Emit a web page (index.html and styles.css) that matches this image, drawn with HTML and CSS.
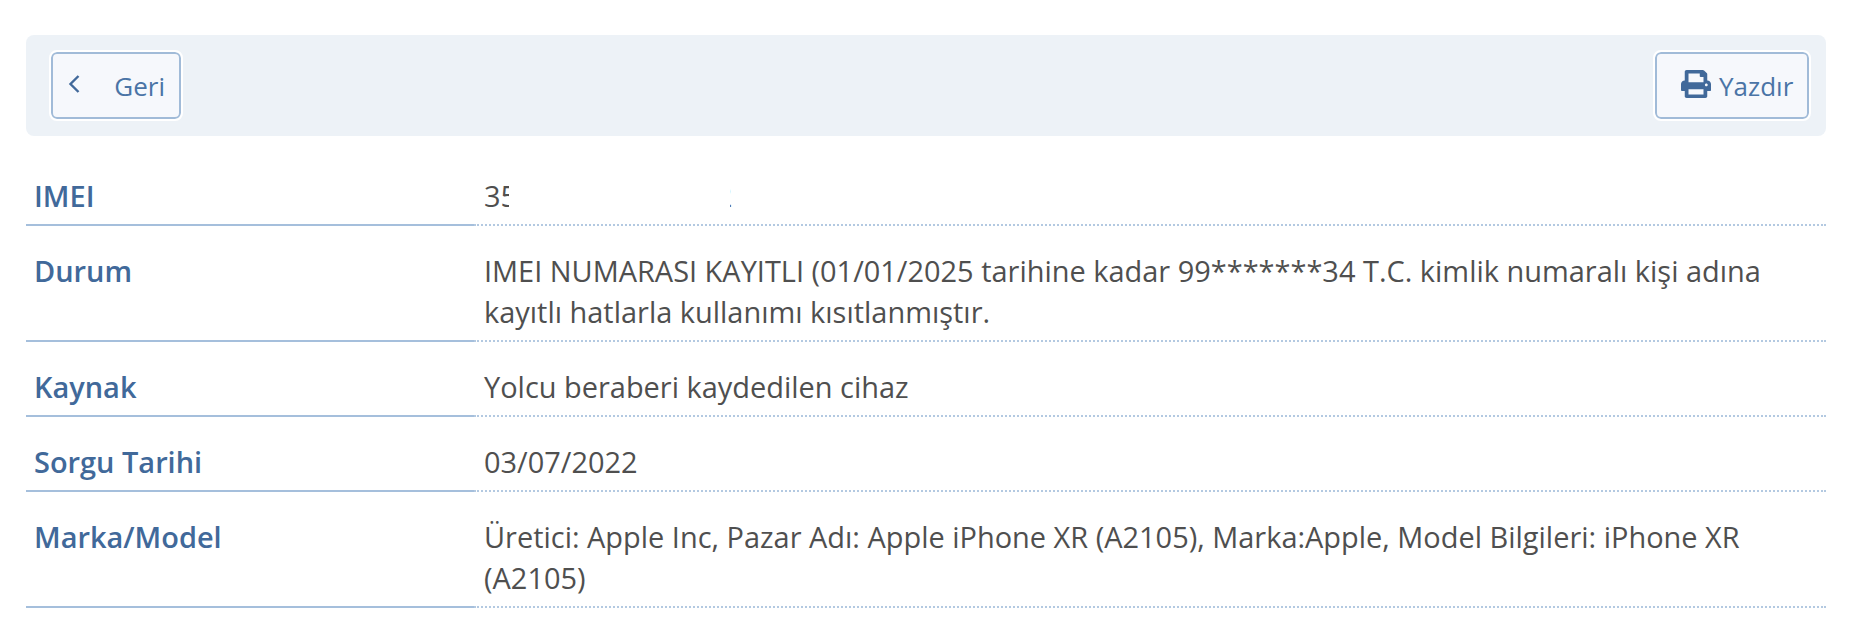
FILE: index.html
```html
<!DOCTYPE html>
<html lang="tr">
<head>
<meta charset="utf-8">
<title>IMEI Sorgu</title>
<link rel="stylesheet" href="styles.css">
</head>
<body>
<main class="page">
  <div class="toolbar">
    <a class="btn btn-back">
      <svg class="chev" viewBox="0 0 12 20" width="12" height="20"><path d="M10.5 2 L2.5 10 L10.5 18" fill="none" stroke="#41699a" stroke-width="2.4"/></svg>
      <span>Geri</span>
    </a>
    <a class="btn btn-print">
      <svg class="printer" viewBox="0 0 512 512" width="30" height="28" preserveAspectRatio="none"><path fill="#41699a" d="M448 192V77.25c0-8.49-3.37-16.62-9.37-22.63L393.37 9.37c-6-6-14.14-9.37-22.63-9.37H96C78.33 0 64 14.33 64 32v160c-35.35 0-64 28.65-64 64v112c0 8.84 7.16 16 16 16h48v96c0 17.67 14.33 32 32 32h320c17.67 0 32-14.33 32-32v-96h48c8.84 0 16-7.16 16-16V256c0-35.35-28.65-64-64-64zm-64 256H128v-96h256v96zm0-224H128V64h192v48c0 8.84 7.16 16 16 16h48v96zm48 72c-13.25 0-24-10.75-24-24 0-13.26 10.75-24 24-24s24 10.74 24 24c0 13.25-10.75 24-24 24z"/></svg>
      <span>Yazdır</span>
    </a>
  </div>
  <dl class="details">
    <div class="row">
      <dt>IMEI</dt>
      <dd><span class="imei">350000000000002<span class="mask"></span></span></dd>
    </div>
    <div class="row">
      <dt>Durum</dt>
      <dd>IMEI NUMARASI KAYITLI (01/01/2025 tarihine kadar 99*******34 T.C. kimlik numaralı kişi adına kayıtlı hatlarla kullanımı kısıtlanmıştır.</dd>
    </div>
    <div class="row">
      <dt>Kaynak</dt>
      <dd>Yolcu beraberi kaydedilen cihaz</dd>
    </div>
    <div class="row">
      <dt>Sorgu Tarihi</dt>
      <dd>03/07/2022</dd>
    </div>
    <div class="row">
      <dt>Marka/Model</dt>
      <dd>Üretici: Apple Inc, Pazar Adı: Apple iPhone XR (A2105), Marka:Apple, Model Bilgileri: iPhone XR (A2105)</dd>
    </div>
  </dl>
</main>
</body>
</html>
```

FILE: styles.css
```css
* { box-sizing: border-box; }
html, body { margin: 0; background: #fff; }
body { font-family: "Open Sans", "Noto Sans", sans-serif; font-size: 28.95px; color: #4f4f4f; }
.page { padding: 35px 30px 0 26px; }
.toolbar {
  display: flex;
  justify-content: space-between;
  align-items: center;
  height: 101px;
  padding: 0 17px 0 25px;
  background: #edf2f7;
  border-radius: 8px;
}
.btn {
  display: flex;
  align-items: center;
  height: 67px;
  border: 2px solid #a1bbd8;
  outline: 2px solid #fff;
  border-radius: 6px;
  background: #f6f8fc;
  color: #4a74a6;
  font-size: 26px;
  line-height: 1;
}
.btn-back { width: 130px; padding: 0 14px 0 15px; justify-content: space-between; }
.btn-print { width: 154px; padding: 0 15px 0 24px; gap: 8px; }
.chev { margin-bottom: 3px; }
.printer { flex: none; margin-bottom: 3px; }
.details { margin: 15px 0 0; }
.row { display: flex; }
.row dt {
  flex: 0 0 448px;
  padding: 24px 8px 8px;
  font-weight: 600;
  line-height: 41px;
  color: #41699a;
  border-bottom: 2px solid #a5bfdc;
}
.row dd {
  flex: 1;
  margin: 0;
  padding: 24px 8px 8px 10px;
  line-height: 41px;
  border-bottom: 2px dotted #b3c9e1;
}
.imei { position: relative; display: inline-block; }
.mask {
  position: absolute;
  left: 25px;
  top: 0;
  width: 221px;
  height: 100%;
  background: #fff;
}
```
